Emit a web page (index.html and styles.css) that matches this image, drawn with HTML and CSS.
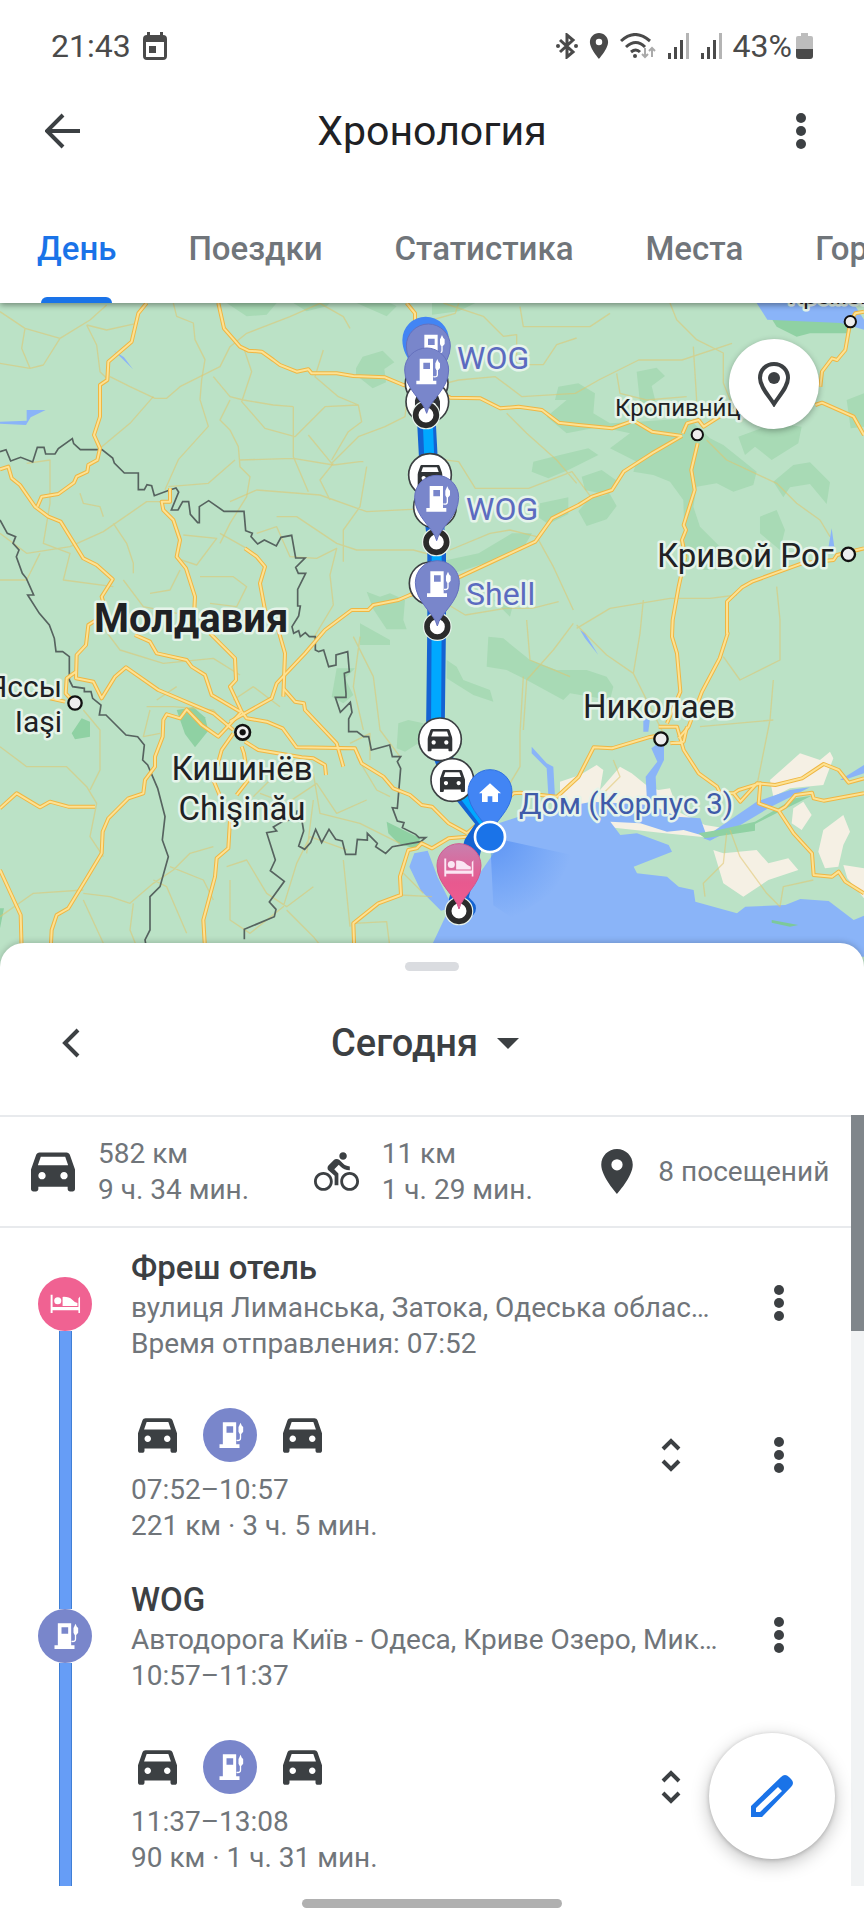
FILE: index.html
```html
<!DOCTYPE html>
<html lang="ru">
<head>
    <meta charset="UTF-8">
    <meta name="viewport" content="width=device-width, initial-scale=1.0">
    <title>Хронология</title>
    <link rel="stylesheet" href="styles.css">
</head>
<body>
    <!-- Общие иконки -->
    <svg class="sprite" aria-hidden="true">
        <symbol id="i-car" viewBox="3 5 18 16">
            <path fill-rule="evenodd" d="M18.92 6.01C18.72 5.42 18.16 5 17.5 5h-11c-.66 0-1.21.42-1.42 1.01L3 12v8c0 .55.45 1 1 1h1c.55 0 1-.45 1-1v-1h12v1c0 .55.45 1 1 1h1c.55 0 1-.45 1-1v-8l-2.08-5.99zM7.5 16c-.83 0-1.5-.67-1.5-1.5S6.67 13 7.5 13s1.5.67 1.5 1.5S8.33 16 7.5 16zm9 0c-.83 0-1.5-.67-1.5-1.5s.67-1.5 1.5-1.5 1.5.67 1.5 1.5-.67 1.5-1.5 1.5zM5.8 10.2l1.2-3.4h10l1.2 3.4H5.8z"/>
        </symbol>
        <symbol id="i-bike" viewBox="0 1 24 22">
            <path d="M15.5 5.5c1.1 0 2-.9 2-2s-.9-2-2-2-2 .9-2 2 .9 2 2 2zM5 12c-2.8 0-5 2.2-5 5s2.2 5 5 5 5-2.2 5-5-2.2-5-5-5zm0 8.5c-1.9 0-3.5-1.6-3.5-3.5s1.6-3.5 3.5-3.5 3.5 1.6 3.5 3.5-1.6 3.5-3.5 3.5zm5.8-10l2.4-2.4.8.8c1.3 1.3 3 2.1 5.1 2.1V9c-1.5 0-2.7-.6-3.6-1.5l-1.9-1.9c-.5-.4-1-.6-1.6-.6s-1.1.2-1.4.6L7.8 8.4c-.4.4-.6.9-.6 1.4 0 .6.2 1.1.6 1.4L11 14v5h2v-6.2l-2.2-2.3zM19 12c-2.8 0-5 2.2-5 5s2.2 5 5 5 5-2.2 5-5-2.2-5-5-5zm0 8.5c-1.9 0-3.5-1.6-3.5-3.5s1.6-3.5 3.5-3.5 3.5 1.6 3.5 3.5-1.6 3.5-3.5 3.5z"/>
        </symbol>
        <symbol id="i-place" viewBox="5 2 14 20">
            <path d="M12 2C8.13 2 5 5.13 5 9c0 5.25 7 13 7 13s7-7.75 7-13c0-3.87-3.13-7-7-7zm0 9.5a2.5 2.5 0 0 1 0-5 2.5 2.5 0 0 1 0 5z"/>
        </symbol>
        <symbol id="i-more" viewBox="0 0 12 38">
            <circle cx="6" cy="6" r="5"/><circle cx="6" cy="19" r="5"/><circle cx="6" cy="32" r="5"/>
        </symbol>
        <symbol id="i-expand" viewBox="0 0 20 36">
            <path d="M2 12l8-8 8 8M2 24l8 8 8-8" fill="none" stroke="currentColor" stroke-width="4"/>
        </symbol>
        <symbol id="i-fuel" viewBox="0 0 80 84">
            <path fill-rule="evenodd" d="M17 4h40v66h10v11H7V70h10zM28 16v19h20V16z"/>
            <path d="M66 14l4-9 4 9 4 4v14l-5 6h-6l-3-6V18z"/>
            <path d="M70 36v16q0 8-12 6" fill="none" stroke="currentColor" stroke-width="4"/>
        </symbol>
        <symbol id="i-bed" viewBox="0 0 96 60">
            <path d="M2 1h6v38h80V13l5-6v51h-5v-9H8v9H2z"/>
            <circle cx="24" cy="20" r="11"/>
            <path d="M39 36V8q20-1 29 8 7 8 17 11v9z"/>
        </symbol>
        <symbol id="i-signal" viewBox="0 0 22 26">
            <path d="M1 20h3v6H1zM7 14h3v12H7zM13 7h3v19h-3z"/>
            <path d="M19 0h3v26h-3z" fill="#b4b4b4"/>
        </symbol>

        <!-- Метки маршрута -->
        <symbol id="m-car" viewBox="-70 -70 140 140">
            <circle r="64" fill="#fff" stroke="#3c4043" stroke-width="5"/>
            <svg x="-38" y="-31" width="76" height="68"><use href="#i-car" fill="#303336"/></svg>
        </symbol>
        <symbol id="m-ring" viewBox="-45 -45 90 90">
            <circle r="43" fill="#e8f3ec"/>
            <circle r="31" fill="#fff" stroke="#2b2b2b" stroke-width="17"/>
        </symbol>
        <path id="m-pin" d="M0 130C-8 92-66 58-66 0A66 66 0 1 1 66 0C66 58 8 92 0 130z"/>
    </svg>

    <header class="header">
        <div class="status-bar">
            <div class="status-group">
                <span>21:43</span>
                <svg width="24" height="28" viewBox="0 0 24 28"><path fill-rule="evenodd" d="M4 0h3v3h10V0h3v3q4 0 4 4v17q0 4-4 4H4q-4 0-4-4V7q0-4 4-4zM3 10v15h18V10zM6 14h7v7H6z"/></svg>
            </div>
            <div class="status-group status-group--right">
                <svg width="22" height="26" viewBox="0 0 22 26"><path d="M4 7l13 12-6 5V2l6 5L4 19" fill="none" stroke="currentColor" stroke-width="3"/><circle cx="2" cy="13" r="2"/><circle cx="20" cy="13" r="2"/></svg>
                <svg width="20" height="26"><use href="#i-place"/></svg>
                <svg width="36" height="26" viewBox="0 0 36 26"><path d="M1 8q14-13 29 0M6 14q10-9 19 0M11 19q5-4 9 0" fill="none" stroke="currentColor" stroke-width="3"/><circle cx="15" cy="23" r="2"/><path d="M25 15v9m-3-3l3 3 3-3M32 24v-9m-3 3l3-3 3 3" fill="none" stroke="#aaa" stroke-width="2"/></svg>
                <svg width="22" height="26"><use href="#i-signal"/></svg>
                <svg width="22" height="26"><use href="#i-signal"/></svg>
                <span class="battery">43%<svg width="17" height="26" viewBox="0 0 17 26"><path d="M5 0h7v3h3q2 0 2 2v12H0V5q0-2 2-2h3z" fill="#bdbdbd"/><path d="M0 16h17v7q0 3-3 3H3q-3 0-3-3z"/></svg></span>
            </div>
        </div>

        <div class="app-bar">
            <button class="icon-btn" type="button" aria-label="Назад">
                <svg width="36" height="36" viewBox="0 0 36 36"><path d="M35 18H3M18 2L2 18l16 16" fill="none" stroke="currentColor" stroke-width="4"/></svg>
            </button>
            <h1>Хронология</h1>
            <button class="icon-btn icon-btn--end" type="button" aria-label="Ещё">
                <svg width="12" height="38"><use href="#i-more"/></svg>
            </button>
        </div>

        <div class="tabs" role="tablist">
            <button class="tab active" type="button" role="tab" aria-selected="true">День</button>
            <button class="tab" type="button" role="tab">Поездки</button>
            <button class="tab" type="button" role="tab">Статистика</button>
            <button class="tab" type="button" role="tab">Места</button>
            <button class="tab" type="button" role="tab">Города</button>
        </div>
    </header>

    <div class="map">
        <svg class="map-canvas" viewBox="0 303 864 665">
            <defs>
                <linearGradient id="bedPin" x1="0" y1="0" x2="0" y2="1">
                    <stop offset="0" stop-color="#c87fae"/>
                    <stop offset="0.6" stop-color="#e8598f"/>
                    <stop offset="1" stop-color="#ee5c8f"/>
                </linearGradient>
                <radialGradient id="beam" gradientUnits="userSpaceOnUse" cx="1470" cy="1611" r="250">
                    <stop offset="0" stop-color="#3f7ff0" stop-opacity="0.6"/>
                    <stop offset="1" stop-color="#4285f4" stop-opacity="0"/>
                </radialGradient>

                <g id="roads">
                    <path d="M440 9l-25 31-20 85-70 60-3 55-22 15v95l-18 55 18 40-8 35-27 15-3 20-32 15-8 18-47 34-50 8-13 30M0 508l25-8 10 35 25 20 45 65 40 30 37 15 68 110 40 20 48 43-33 52 15 50-55 35-7 60-28 30-2 70 52 10 25 50 40-65 33-28 97 68 165 70 60 50M228 1115l-28 20-3 45 28 30M150 1195l45 10"/>
                    <path d="M510 565l0 40h-25l5 25 30 30 20 60-10 50 28 35 27 85-2 40M405 1005l45 20 20 35 90 20 15 20 40 25 20 60 85 50M735 745l35 25 25 30-15 50 15 80 40 60 20 70-5 130M630 1000l75 75 3 65-18 20 35 75"/>
                    <path d="M655 9l17 76 48 55 25 12 40 3 35 25 20 15 50 20 35-7 10 12h75l50 8 95 4 55 23 75 10 66 28 90 2 60 30 55-5 70 10 50 38 60 7 100 10 65-23 55 33 90 13M1220 9l25 31v50"/>
                    <path d="M2046 408l-90 52-85 55-35 55-60 20-40 25-80 40-50 70-230 107-146 53-35 15-75 15-15 15h-50l-80 60-60 70-85 90-15 45-125 70"/>
                    <path d="M2093 430l-19 80 10 60-33 105 7 15-12 30 10 50-20 90-18 100-2 50 15 50 10 115-40 95M2592 745l-81 20-10 15-95 10-150 55-30 17-45 43 0 95 2 0-24 75-53 100-40 105-30 35"/>
                    <path d="M2592 405l-31-55-95-42-20 7M2240 310l-74 35-55 35-15-20-35 10-13 30M2592 35l-26 5-15 25-15 85-25 30-15-5-30 40-5 45"/>
                    <path d="M850 1165l35 40 27 5 3 20 95 100 20 70M725 1235l15 20 60 10 48 20 42 57 175 3 20 45 65 40 30 35 50 20 35 30 31 5 50 50 55 30M735 1325l40 25 130 22 35 3 35 20 3 30M725 1340l7 20 13 80-35 45"/>
                    <path d="M700 1300l-35 50-25 90 50 120-5 85-35 30-5 55-35 130 5 85M725 1235l-70 75-50-35-45-47-20 27-40-12-10 17-2 50-23 60v30l-30 40-5 40-45 15-60 60-17 40-3 65-45 75-55 90-35 20-15 45-3 60M0 1525l50-45 70 42 30-17 55 15h80M0 1710l62 135 3 105"/>
                    <path d="M1401 1610l-55 5-50 30-31-15-15 15-25 5-25 80 3 55-68 25-75 60 3 85M1401 1600l140-120 20-2 110 12 65-60 45-88 55 3 110-33 40-7"/>
                    <path d="M1976 1280h55l20 70 45 70 55 40 10 20h40l20 25 50-55 55 5 80-20 65-43 45 18 30 38 46-13M2201 1480l15-10 65-20-5 60 60 22 20-12 30-35 50-7 5 17 30 7 121-22M2336 1532l45 68 55 60 5 65 55 5 20-15 20 30 56 35M2011 1330l40-5 10-45"/>
                </g>
            </defs>

            <g transform="translate(0 300) scale(0.33333)">
                <!-- Леса -->
                <g fill="#a8dab5">
                    <path d="M680 9l60 40 60-5 30-35zM880 9l40 25 60-15 10-10zM1070 9l90 40 30-30-20-10z"/>
                    <path d="M1068 205l20-35 60-18 35 35-30 20 5 40-40 18-50-40z"/>
                    <path d="M1100 875l40 15 30-10 45 20-5 60 10 28-60 0-40-60z"/>
                    <path d="M1296 9h60l80-5-60 30-80 10z"/>
                    <path d="M1665 300l10-40 60-10 50 30-5 60 50 30 85-5 150-10 65 60 40 20 100 80-10 40-60 20-50-25-60 10-10 60 20 60 60 60 100 35 10 30-100 5-70 0-45-30-5-180-40-55-50-20-60-10 10-30-80-40 60-45-90-20-100 20-60-50 60-50z"/>
                    <path d="M1600 485l80-20 85-20 30 20-90 45-60 25-50-20zM1745 530l60-20 50 35-30 40-70-15zM1620 610l85-18 0 50-60 30-30-20zM1770 595l60-12 20 35-30 40-60 20-25-45zM1910 215l60-12 25 25-40 30 15 60-50-10z"/>
                    <path d="M2215 410l110-40 80 10-10 50-80 50-50-40-30 25zM2320 545l60-50 50-8 60 60-10 65-50-60-60 10-20 30zM2280 650l50-20 25 60-15 60-60-50zM2540 300l52-20v100l-40 5z"/>
                    <path d="M1296 790l140-30 100-60 60 0-30 50-110 40-160 50zM1480 900l60 10-10 40z"/>
                    <path d="M1465 1010l45 5 80 65 80 30 90 0 60 20 20 30-10 40-120-20-20 20-110-60-60-30-60-10z"/>
                    <path d="M1340 1080l30 20 20 40 80 30 10 35-60-20-80-50z"/>
                    <path d="M1080 970l90 50 0 15-90 0zM1010 1105l55 0-30 30 25 50-30 25-35-20zM1195 1270l30-10 45 10-15 60-40 25-25-10z"/>
                </g>
                <g fill="#8fd1a3">
                    <path d="M530 1230l50-8 35 30 10 40-40 50-30-40z"/>
                    <path d="M215 1300l30-45 25 10 0 45-45 8zM1160 1565l100 50-5 35-60-20-30-30z"/>
                    <path d="M0 1825l12 0-12 60zM2280 0l80 60 40-20 160 20-10 40-120 0-40 10-60-30z"/>
                </g>

                <!-- Пески -->
                <g fill="#f5f0e4">
                    <path d="M1680 1445l60-20 50-30 20 15-10 60 60-70 35 20 50 40 30 10 35-5 25 70 80 40 60 10-30 30-150-15-180-20-135 0z"/>
                    <path d="M2310 1440l90-80 60 20 30-25 10 20-30 80-100 10-50 25z"/>
                    <path d="M2140 1650l30 10 100-10 35 40 60-15 30 35-90 30-75 50-60-40z"/>
                    <path d="M2380 1525l30-20 25 40-30 45-30-20zM2470 1590l60-45 20 50-20 40-15 65-40 5-20-50zM2530 1695l62 10v90l-50-60z"/>
                </g>

                <!-- Вода -->
                <g fill="#8ab4f8">
                    <path d="M1296 1935l45-95 15-30 60-50 30-50 35-50 15-90 60-20 140-30 80-15 180 10 75 35 70 5 20 55-70-20-50 5-80-25-90-5 30 40 50-5 95 35 10 20-115 45 10 20 90 10 35 30 45 10 5 35 125 35 25-20 120-5 45-18 85 6 75 57 36-15v125H1296z"/>
                    <path d="M1228 1700l15-40 40-8 30 80 30 60 20 30-40 10-60-60z"/>
                    <path d="M1975 1330l17 0 0 50-25 50 5 100-30-10-5-90 35-45-18-40zM1930 1255l20 0-5 40-15 0zM1595 1340l45 50 20 10 5 90-20-5-5-80-45-45zM1740 990l15 10 40 65-40-50z"/>
                    <path d="M2270 9h290l32 50v30l-70-20-220-10zM2485 745l10-60 10 70zM2520 1440l72-45v25l-60 20zM2110 1615l160-110 100-35 60-8-120 60-100 60-80 40z"/>
                    <path d="M0 365l80-3 0-32 57 0-45 22-14 23-78-4zM342 152l30 20 27 36-35-35z"/>
                </g>
                <path d="M2095 1600l60-10 110-25 120-70 50-8-100 50-70 35 0 20-30 5-120 18z" fill="#8fd1a3"/>
                <path d="M2315 1860l80 15-25 5-55-12z" fill="#7cc99a"/>
                <path d="M1470 1611l250 55-60 110-120 80-60-40z" fill="url(#beam)"/>

                <!-- Второстепенные дороги -->
                <g class="road-minor">
                    <path d="M0 35l75 50 105 30 90-55 50-45M75 85l-10 60 25 60-90-15M180 115l-50 80-40 10M260 75l30 60 10 80 20 20M260 75l60 15 90-20M330 230l60 30 75 35 35 0 40-35 60-30 60-30 30-60 50-40 130-50 90-40 70 40 20 35"/>
                    <path d="M520 9l10 40 50 20 5 50 30 60-10 60-5 60 25 80-90 100-40 90M640 230l50 60 40 10 90 15 60 5M690 300l-30 60 30 30 25 50 5 60 30 30-10 60-50 80-30 60M730 140l25 75-30 90 70 80 90 25 90-90 100-5M925 405l70 85 80-80 80-30 60-30 10-80M300 445l90-75 70-80M880 320l0 150 45 105M720 480l160-5 120 20 80-10 10 0M970 150l-25 80 70 60 60 25 10 50-40 30-50 85"/>
                    <path d="M505 560l120-10 80-70M690 605l80-35 190 15 140 50 196-10M1000 490l-40 50 30 60M830 650l60 0 120 80 60 20 170 0 56 15M1100 500l-20 120-50 70 0 95M770 700l60-20 40 90 80 5 60-30-20 80 10 90-60 100"/>
                    <path d="M0 700l80 60 130-20 100-45 130-90 50 0M80 490l70-10 0 130-20 120 80 30-20 80 150 20M240 580l10 30 50 10 10 30M340 670l40 60 20 60 0 30M0 840l80 0 40-80M530 775l60 20 60-80-100-10M600 830l100 0 40 30-30 60-80-10M450 880l60-10 30-60M370 840l60 80 150 30M660 700l80 45"/>
                    <path d="M1296 60l70-20 10-30M1330 9l120 40 60 60 40-5 0 90 80 0 40-60 60-20M1560 20l10 60 200 0 60-40M1296 260l80-20 110-10 80 60 160-10 70-40 120-60 130 0 150-50M2010 9l20 50 60 60 80 40 0 90 40 100M2080 140l10 160-10 60M1850 220l10 60 80 20 120-10"/>
                    <path d="M1296 475l80 10 50 80 160 0 130-50 60 80M1520 340l60 60 90 80 60 70M1350 750l120-50 60-10 80 20 50 90 60 130M1296 885l100 60 120-20 80 0 80-20M1730 985l100-60 180-30 120 0 80-10M2120 420l60 60 150 70 60 60 70 50 30 50M1930 900l-10 100-20 120M2330 860l10 100 0 120-120 60-50-70M1720 970l-60 80-80 90-10 150M1730 975l90 90 80 55 90 180M1580 960l10 120 120 50M1570 1130l-10 170 0 100-60 100M2320 1140l-10 120-40 200M2100 1280l220-20M1840 1380l20 50-60 60 0 70M2190 1590l30 80 80 110 40 40 10-60 90-20M2180 1600l-10 90-60 60 5 40"/>
                    <path d="M0 1340l80 60 120 0 60 60 30 50-20 100 40 60M250 1230l50 60 0 120-30 60M300 970l60 80 130 40 150-15 80 50M470 1200l60-40M440 1220l80 0 120 10 50 60M450 1230l-20 80 50-10M250 1780l80 10 60 20 70-60 60-40 50-50 70-20M510 1700l100 40 30 60M400 1810l-10 80 20 50M460 1740l40 20 60 140M0 1850l100-70 150-10M250 1800l60 130M680 1700l60-20 60 100 60 40 80-60M690 1740l0 120 60 40 100-80 40-130 40-80 110 40M860 1830l80 80 40 50M1030 1680l20 200M700 1200l60-40 80 60M780 1480l80 30 90-60 60 90 90-40M760 1490l60-60 120 0M940 1420l20 120 120 30 120 60M1050 1330l60-30 0 80M1070 1370l60 100 40 20M1080 1010l-20 150 30 130M940 1500l-20 160M1060 1010l60 120 20 160 60 80"/>
                    <path d="M1200 1785l96 5M1060 1870l100-5 10 80M1320 1270l30 80 0 150M1210 1720l60 60"/>
                </g>

                <!-- Граница -->
                <g class="border-line">
                    <path d="M0 455l18-6 14 34 30-11 36 14 14-44h20l5 20h28l10-16 42-30 4 15 20 18h65l32 25 5 15 30 30h42v50h18l8-15 14 3 8 30 40-15 25-8 8 12-22 54h20l14-25h18l5 38 22 25h5v-48l28-18 46 32h60l5 58 20 8-4 10 20 22 20-12 36 18 14-26 32-6 12 68 28 0-28 28 8 18h22l-24 48v50l8 0-5 30-20 32 5 20 15-8 5 18 15-12 12 12 18 0 0 40 10 5 15-5 15 50 22-5 0-30 35-10 5 60-15 5 5 60 0 12-32 0 15 45 30-30 5 30-10 20 0 38 25 0 20 15h15l8 40 55-15 8 35 25 0-10 15 10 20-10 120-15-2 15 40 20 5-5 15 40 20 10 10 20 0-15 12-85 15-20 20-30-20 5-10-30-30 0 20-30-2-5 45-30 0-10-40-20-5-20-30-22 40-18-40-15 40-18 20-18-10 15-45-10-60-10 0-3 25-38 5-30 18 10 12-30 5 26 82-15 32 42 32-45 62 20 22-5 22-90 38-0 30"/>
                    <path d="M0 660l22 40 25 10-8 20 18 20-8 20 18 50 12 15 22 50-18 0 35 55 30 35 15 40 5 40 20 0 20 15 0 70 10 20 35 5 0 10 20 0 5 20 25 20-5 30 20 0 60 60 35 5 20 25-5 45 15 15 30 70 22 85-8 70 18 50-25 90-30 30 0 100-15 30 15 80"/>
                </g>

                <!-- Основные дороги: обводка и заливка одной геометрии -->
                <use href="#roads" class="road-casing"/>
                <use href="#roads" class="road-fill"/>

                <!-- Города -->
                <g fill="#eee" stroke="#111">
                    <circle cx="225" cy="1209" r="20" stroke-width="7"/>
                    <circle cx="1983" cy="1317" r="20" stroke-width="7"/>
                    <circle cx="2545" cy="763" r="20" stroke-width="7"/>
                    <circle cx="2092" cy="404" r="17" stroke-width="6"/>
                    <circle cx="2551" cy="65" r="17" stroke-width="6"/>
                    <circle cx="728" cy="1297" r="22" stroke-width="8"/>
                    <circle cx="728" cy="1297" r="9" fill="#111"/>
                </g>

                <!-- Маршрут -->
                <g fill="none" stroke-linejoin="round" stroke-linecap="round">
                    <path d="M1278 340l10 190 22 200 0 240-4 340 50 130 104 130-40 60-45 170 25 25" stroke="#1463d2" stroke-width="56"/>
                    <path d="M1284 380l6 150 20 200 0 240-2 340 50 130 90 120" stroke="#00a8ff" stroke-width="30"/>
                </g>

                <use href="#m-car" x="1210" y="180" width="140" height="140"/>
                <use href="#m-car" x="1212" y="235" width="140" height="140"/>
                <use href="#m-ring" x="1233" y="300" width="90" height="90"/>
                <use href="#m-pin" transform="translate(1277 120) scale(1.06)" fill="#4285f4"/>
                <g color="#fff" fill="#7986cb" stroke="#6470bd" stroke-width="3">
                    <use href="#m-pin" transform="translate(1285 138)"/>
                    <use href="#i-fuel" x="1256" y="100" width="80" height="84" fill="#fff" stroke="none"/>
                    <use href="#m-pin" transform="translate(1280 210)"/>
                    <use href="#i-fuel" x="1242" y="172" width="80" height="84" fill="#fff" stroke="none"/>
                </g>

                <use href="#m-car" x="1220" y="455" width="140" height="140"/>
                <use href="#m-car" x="1235" y="550" width="140" height="140"/>
                <use href="#m-ring" x="1264" y="681" width="90" height="90"/>
                <use href="#m-car" x="1222" y="780" width="140" height="140"/>
                <use href="#m-ring" x="1267" y="935" width="90" height="90"/>
                <g color="#fff" fill="#7986cb" stroke="#6470bd" stroke-width="3">
                    <use href="#m-pin" transform="translate(1310 592)"/>
                    <use href="#i-fuel" x="1272" y="554" width="80" height="84" fill="#fff" stroke="none"/>
                    <use href="#m-pin" transform="translate(1312 848)"/>
                    <use href="#i-fuel" x="1274" y="810" width="80" height="84" fill="#fff" stroke="none"/>
                </g>

                <use href="#m-car" x="1250" y="1248" width="140" height="140"/>
                <use href="#m-car" x="1287" y="1370" width="140" height="140"/>
                <use href="#m-pin" transform="translate(1470 1475)" fill="#4285f4" stroke="#2f6fe0" stroke-width="3"/>
                <path d="M1470 1450l33 30h-9v26h-17v-17h-14v17h-17v-26h-9z" fill="#fff"/>
                <circle cx="1470" cy="1611" r="45" fill="#1a73e8" stroke="#fff" stroke-width="8"/>
                <use href="#m-ring" x="1332" y="1788" width="90" height="90"/>
                <use href="#m-pin" transform="translate(1377 1697)" fill="url(#bedPin)" stroke="#d0578f" stroke-width="3"/>
                <use href="#i-bed" x="1331" y="1674" width="92" height="58" fill="#fbe6f3"/>
            </g>

            <!-- Подписи -->
            <g class="map-labels">
                <text class="label-small" x="788" y="304">Кременчуг</text>
                <text class="label-small" x="615" y="416">Кропивни́цкий</text>
                <text x="657" y="567">Кривой Рог</text>
                <text x="583" y="718">Николаев</text>
                <text x="62" y="697" class="label-mid" text-anchor="end">Яссы</text>
                <text x="62" y="732" class="label-mid" text-anchor="end">Iaşi</text>
                <text x="242" y="780" text-anchor="middle">Кишинёв</text>
                <text x="242" y="820" text-anchor="middle">Chişinău</text>
                <text x="94" y="632" class="label-country">Молдавия</text>
                <text class="label-stop" x="457" y="369">WOG</text>
                <text class="label-stop" x="466" y="520">WOG</text>
                <text class="label-stop" x="466" y="605">Shell</text>
                <text class="label-home" x="519" y="814">Дом (Корпус 3)</text>
            </g>
        </svg>

        <button class="map-btn" type="button" aria-label="Места на карте">
            <svg width="32" height="45" viewBox="0 0 32 45"><path d="M16 2C8 2 2 8 2 16c0 9 9 18 14 26 5-8 14-17 14-26 0-8-6-14-14-14z" fill="none" stroke="currentColor" stroke-width="4"/><circle cx="16" cy="16" r="6"/></svg>
        </button>
    </div>

    <main class="sheet">
        <div class="sheet-handle"></div>

        <div class="date-bar">
            <button class="icon-btn" type="button" aria-label="Предыдущий день">
                <svg width="20" height="30" viewBox="0 0 20 30"><path d="M17 2L4 15l13 13" fill="none" stroke="currentColor" stroke-width="4"/></svg>
            </button>
            <div class="date-select">
                <select aria-label="Дата">
                    <option>Сегодня</option>
                </select>
                <svg width="22" height="11" viewBox="0 0 22 11"><path d="M0 0h22L11 11z"/></svg>
            </div>
        </div>

        <div class="scroll-area">
            <div class="content">
                <div class="summary">
                    <div class="summary-item">
                        <span class="summary-icon"><svg width="44" height="40"><use href="#i-car"/></svg></span>
                        <p>582 км<br>9 ч. 34 мин.</p>
                    </div>
                    <div class="summary-item">
                        <span class="summary-icon"><svg width="45" height="42"><use href="#i-bike"/></svg></span>
                        <p>11 км<br>1 ч. 29 мин.</p>
                    </div>
                    <div class="summary-item summary-item--places">
                        <span class="summary-icon"><svg width="32" height="45"><use href="#i-place"/></svg></span>
                        <p>8 посещений</p>
                    </div>
                </div>

                <ul class="timeline">
                    <li class="entry entry--first">
                        <div class="rail"><span class="badge badge--hotel"><svg width="31" height="20"><use href="#i-bed"/></svg></span></div>
                        <div class="entry-body">
                            <h2>Фреш отель</h2>
                            <p>вулиця Лиманська, Затока, Одеська облас…</p>
                            <p>Время отправления: 07:52</p>
                        </div>
                        <div class="entry-actions">
                            <button class="row-btn" type="button" aria-label="Ещё"><svg width="12" height="38"><use href="#i-more"/></svg></button>
                        </div>
                    </li>
                    <li class="entry entry--trip">
                        <div class="rail"></div>
                        <div class="entry-body">
                            <div class="modes">
                                <svg width="39" height="35"><use href="#i-car"/></svg>
                                <span class="badge badge--fuel"><svg width="27" height="28"><use href="#i-fuel"/></svg></span>
                                <svg width="39" height="35"><use href="#i-car"/></svg>
                            </div>
                            <p>07:52–10:57</p>
                            <p>221 км · 3 ч. 5 мин.</p>
                        </div>
                        <div class="entry-actions">
                            <button class="row-btn" type="button" aria-label="Развернуть"><svg width="20" height="36"><use href="#i-expand"/></svg></button>
                            <button class="row-btn" type="button" aria-label="Ещё"><svg width="12" height="38"><use href="#i-more"/></svg></button>
                        </div>
                    </li>
                    <li class="entry">
                        <div class="rail"><span class="badge badge--fuel"><svg width="27" height="28"><use href="#i-fuel"/></svg></span></div>
                        <div class="entry-body">
                            <h2>WOG</h2>
                            <p>Автодорога Київ - Одеса, Криве Озеро, Мик…</p>
                            <p>10:57–11:37</p>
                        </div>
                        <div class="entry-actions">
                            <button class="row-btn" type="button" aria-label="Ещё"><svg width="12" height="38"><use href="#i-more"/></svg></button>
                        </div>
                    </li>
                    <li class="entry entry--trip">
                        <div class="rail"></div>
                        <div class="entry-body">
                            <div class="modes">
                                <svg width="39" height="35"><use href="#i-car"/></svg>
                                <span class="badge badge--fuel"><svg width="27" height="28"><use href="#i-fuel"/></svg></span>
                                <svg width="39" height="35"><use href="#i-car"/></svg>
                            </div>
                            <p>11:37–13:08</p>
                            <p>90 км · 1 ч. 31 мин.</p>
                        </div>
                        <div class="entry-actions">
                            <button class="row-btn" type="button" aria-label="Развернуть"><svg width="20" height="36"><use href="#i-expand"/></svg></button>
                            <button class="row-btn" type="button" aria-label="Ещё"><svg width="12" height="38"><use href="#i-more"/></svg></button>
                        </div>
                    </li>
                </ul>
            </div>
            <div class="scrollbar"><div class="scrollbar-thumb"></div></div>
        </div>

        <button class="fab" type="button" aria-label="Изменить">
            <svg width="42" height="42" viewBox="0 0 42 42"><path fill-rule="evenodd" d="M0 31L30 2q4-4 8 0l2 2q4 4 0 8L11 42H0zM5 33v4h4l22-21-4-4z"/></svg>
        </button>
    </main>

    <div class="nav-bar"><div class="nav-pill"></div></div>
</body>
</html>
```

FILE: styles.css
```css
* {
    margin: 0;
    padding: 0;
    box-sizing: border-box;
}

body {
    font-family: Roboto, 'Noto Sans', sans-serif;
    background: #fff;
    color: #3c4043;
    height: 100vh;
    display: flex;
    flex-direction: column;
    overflow: hidden;
}

button,
select {
    font: inherit;
    color: inherit;
    background: none;
    border: none;
    cursor: pointer;
}

svg {
    display: block;
    fill: currentColor;
    flex-shrink: 0;
}

.sprite {
    position: absolute;
    width: 0;
    height: 0;
}

/* Шапка */
.header {
    position: relative;
    z-index: 1;
    background: #fff;
    box-shadow: 0 2px 6px rgba(0, 0, 0, 0.4);
}

.status-bar {
    display: flex;
    justify-content: space-between;
    align-items: center;
    height: 92px;
    padding: 0 51px;
    font-size: 32px;
    color: #4a4a4a;
}

.status-group {
    display: flex;
    align-items: center;
    gap: 12px;
}

.status-group--right {
    gap: 11px;
}

.battery {
    display: flex;
    align-items: center;
    gap: 4px;
}

.app-bar {
    display: grid;
    grid-template-columns: 1fr auto 1fr;
    align-items: center;
    height: 78px;
    padding: 0 36px;
}

.app-bar h1 {
    font-size: 41px;
    font-weight: 400;
    color: #202124;
}

.icon-btn {
    display: flex;
    align-items: center;
    justify-content: center;
    width: 54px;
    height: 72px;
}

.icon-btn--end {
    justify-self: end;
}

.tabs {
    display: flex;
    gap: 72px;
    padding: 35px 0 0 37px;
    overflow: hidden;
}

.tab {
    flex-shrink: 0;
    padding-top: 24px;
    font-size: 33px;
    font-weight: 500;
    line-height: 40px;
    color: #70757a;
}

.tab::after {
    content: '';
    display: block;
    height: 6px;
    margin: 28px 4px 0;
    border-radius: 6px 6px 0 0;
}

.tab.active {
    color: #1a73e8;
}

.tab.active::after {
    background: #1a73e8;
}

/* Карта */
.map {
    position: relative;
    flex-shrink: 0;
    background: #bbe2c6;
}

.map-canvas {
    width: 100%;
    height: auto;
}

.road-minor {
    fill: none;
    stroke: #e0c46c;
    stroke-opacity: 0.55;
    stroke-width: 4;
    stroke-linejoin: round;
}

.border-line {
    fill: none;
    stroke: #56635f;
    stroke-width: 5;
}

.road-casing,
.road-fill {
    fill: none;
    stroke-linejoin: round;
}

.road-casing {
    stroke: #efb643;
    stroke-width: 12;
}

.road-fill {
    stroke: #fde293;
    stroke-width: 6;
}

.map-labels {
    font-size: 33px;
    fill: #202124;
    stroke: #e6f4ea;
    stroke-width: 5px;
    stroke-linejoin: round;
    paint-order: stroke;
}

.label-small {
    font-size: 24px;
}

.label-mid {
    font-size: 30px;
}

.label-country {
    font-size: 40px;
    font-weight: 700;
}

.label-stop {
    font-size: 32px;
    fill: #5c6bc0;
}

.label-home {
    font-size: 30px;
    fill: #3f5ba9;
}

.map-btn {
    position: absolute;
    top: 36px;
    right: 45px;
    display: flex;
    align-items: center;
    justify-content: center;
    width: 90px;
    height: 90px;
    border-radius: 50%;
    background: #fff;
    box-shadow: 0 2px 6px rgba(0, 0, 0, 0.3);
}

/* Нижняя панель */
.sheet {
    position: relative;
    flex: 1;
    min-height: 0;
    display: flex;
    flex-direction: column;
    margin-top: -25px;
    padding-top: 19px;
    border-radius: 24px 24px 0 0;
    background: #fff;
    box-shadow: 0 -1px 6px rgba(0, 0, 0, 0.2);
}

.sheet-handle {
    flex-shrink: 0;
    align-self: center;
    width: 54px;
    height: 9px;
    border-radius: 5px;
    background: #dadce0;
}

.date-bar {
    display: grid;
    grid-template-columns: 1fr auto 1fr;
    align-items: center;
    flex-shrink: 0;
    height: 144px;
    padding: 0 58px 0 44px;
}

.date-select {
    display: grid;
    align-items: center;
    font-size: 38px;
    font-weight: 500;
}

.date-select select {
    grid-area: 1 / 1;
    appearance: none;
    padding-right: 40px;
    outline: none;
}

.date-select svg {
    grid-area: 1 / 1;
    justify-self: end;
    pointer-events: none;
}

.scroll-area {
    flex: 1;
    min-height: 0;
    display: flex;
    overflow: hidden;
}

.content {
    flex: 1;
    min-width: 0;
}

.scrollbar {
    width: 13px;
    background: #f1f3f4;
}

.scrollbar-thumb {
    height: 28%;
    background: #80868b;
}

.summary {
    display: grid;
    grid-template-columns: repeat(3, 1fr);
    height: 113px;
    border-top: 2px solid #e8eaed;
    border-bottom: 2px solid #e8eaed;
    font-size: 28px;
    line-height: 36px;
    color: #70757a;
}

.summary-item {
    display: flex;
    align-items: center;
    gap: 19px;
    padding-left: 27px;
    white-space: nowrap;
}

.summary-item--places {
    gap: 15px;
    padding-left: 24px;
}

.summary-icon {
    display: flex;
    justify-content: center;
    width: 52px;
    color: #3c4043;
}

/* Лента дня */
.timeline {
    list-style: none;
}

.entry {
    display: flex;
    padding: 0 36px 0 38px;
}

.rail {
    display: flex;
    flex-direction: column;
    align-items: center;
    flex-shrink: 0;
    width: 54px;
    margin-right: 39px;
}

.rail::before,
.rail::after {
    content: '';
    flex: 1;
    width: 11px;
    border: solid #3f7fd6;
    border-width: 0 1px;
    background: #669df6;
}

.entry--first .rail::before {
    visibility: hidden;
}

.badge {
    display: flex;
    align-items: center;
    justify-content: center;
    flex-shrink: 0;
    width: 54px;
    height: 54px;
    border-radius: 50%;
    color: #fff;
}

.badge--hotel {
    background: #f06292;
}

.badge--fuel {
    background: #7986cb;
}

.entry-body {
    flex: 1;
    min-width: 0;
    padding: 18px 0;
    font-size: 28px;
    line-height: 36px;
    color: #70757a;
}

.entry-body h2 {
    font-size: 33px;
    font-weight: 500;
    line-height: 44px;
    color: #3c4043;
}

.entry-body p {
    overflow: hidden;
    text-overflow: ellipsis;
    white-space: nowrap;
}

.entry--trip .entry-body {
    padding: 28px 0 16px;
}

.modes {
    display: flex;
    align-items: center;
    gap: 26px;
    margin-bottom: 10px;
    padding-left: 7px;
    color: #3c4043;
}

.entry-actions {
    display: flex;
    gap: 36px;
    height: 150px;
    margin-left: 15px;
}

.row-btn {
    display: flex;
    align-items: center;
    justify-content: center;
    width: 72px;
}

.fab {
    position: absolute;
    right: 29px;
    bottom: 27px;
    display: flex;
    align-items: center;
    justify-content: center;
    width: 126px;
    height: 126px;
    border-radius: 50%;
    background: #fff;
    color: #1a73e8;
    box-shadow: 0 5px 18px rgba(0, 0, 0, 0.25), 0 1px 4px rgba(0, 0, 0, 0.2);
}

.nav-bar {
    position: relative;
    display: flex;
    align-items: center;
    justify-content: center;
    flex-shrink: 0;
    height: 34px;
    background: #fff;
}

.nav-pill {
    width: 30%;
    height: 9px;
    border-radius: 5px;
    background: #b0b0b0;
}
```
